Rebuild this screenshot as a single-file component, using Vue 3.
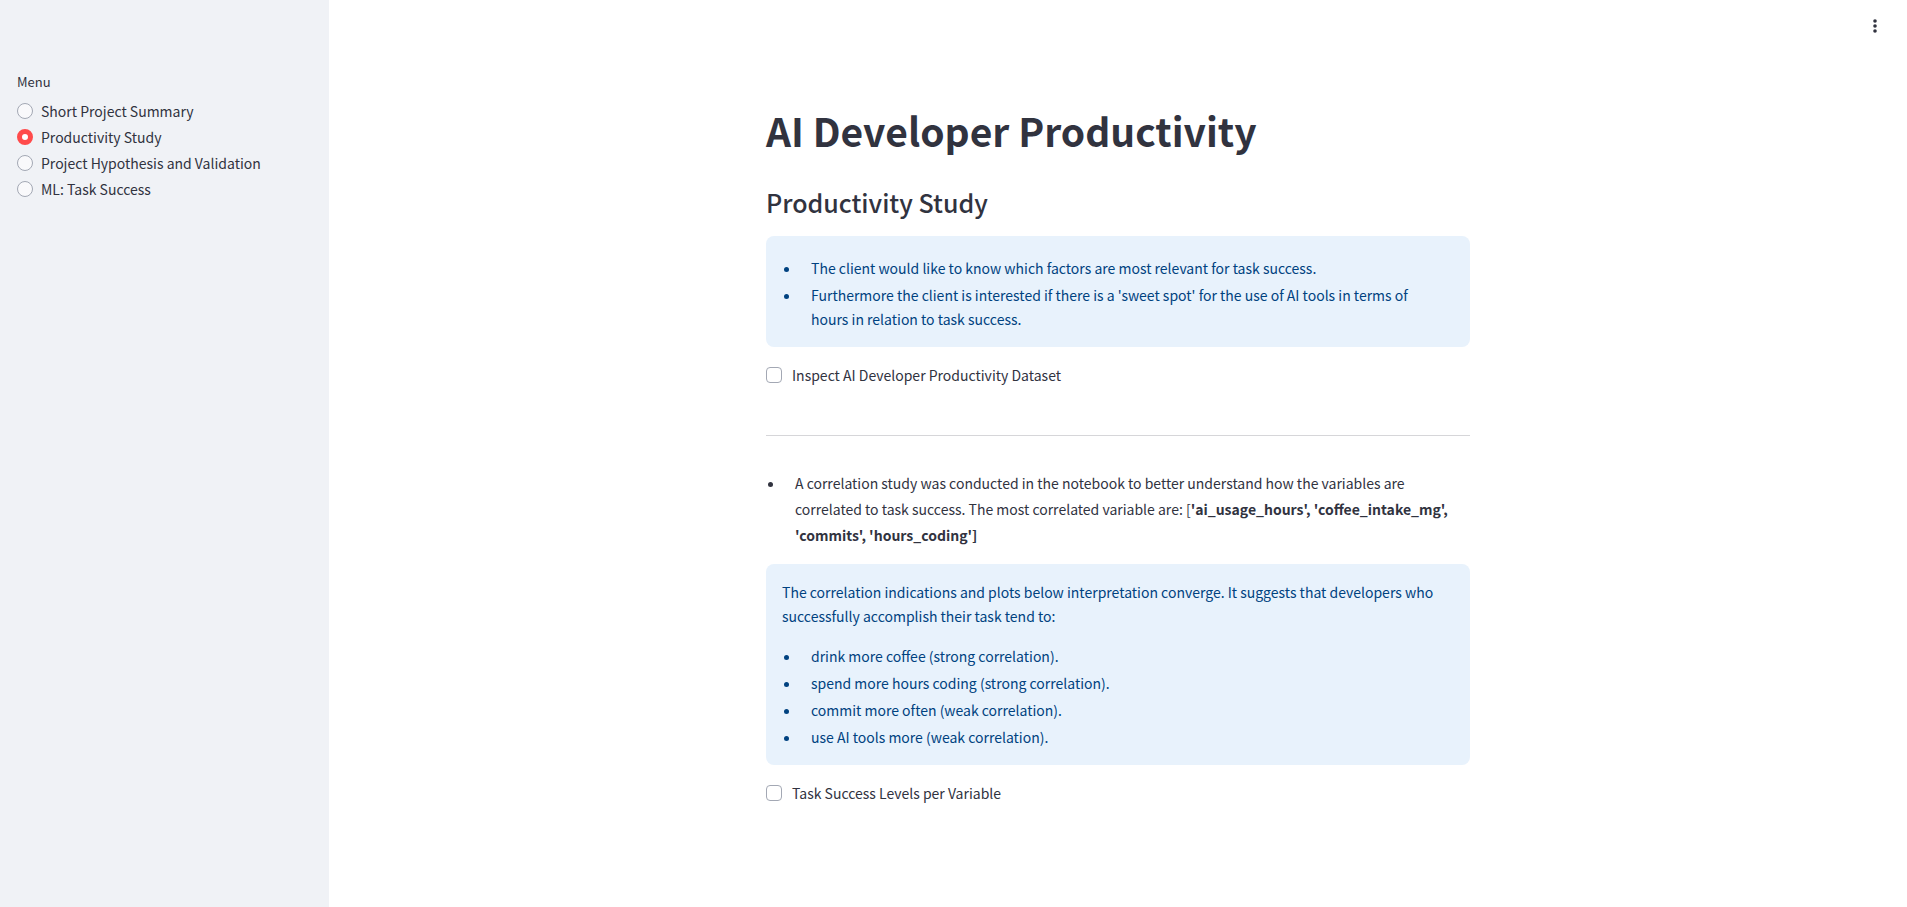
<script setup>
import { ref } from 'vue'

const pages = [
  'Short Project Summary',
  'Productivity Study',
  'Project Hypothesis and Validation',
  'ML: Task Success',
]
const current = ref('Productivity Study')
const inspectDataset = ref(false)
const showLevels = ref(false)

const findings = [
  'drink more coffee (strong correlation).',
  'spend more hours coding (strong correlation).',
  'commit more often (weak correlation).',
  'use AI tools more (weak correlation).',
]
</script>

<template>
  <div class="app">
    <aside class="sidebar">
      <fieldset class="menu">
        <legend>Menu</legend>
        <label v-for="page in pages" :key="page" class="option">
          <input v-model="current" type="radio" name="page" :value="page" />
          <span>{{ page }}</span>
        </label>
      </fieldset>
    </aside>

    <div class="page">
      <header class="toolbar">
        <button type="button" class="kebab" aria-label="Main menu">
          <svg width="20" height="20" viewBox="0 0 20 20" aria-hidden="true">
            <circle cx="10" cy="5" r="1.8" />
            <circle cx="10" cy="10" r="1.8" />
            <circle cx="10" cy="15" r="1.8" />
          </svg>
        </button>
      </header>

      <main class="content">
        <h1>AI Developer Productivity</h1>
        <h2>Productivity Study</h2>

        <section class="info">
          <ul>
            <li>The client would like to know which factors are most relevant for task success.</li>
            <li>
              Furthermore the client is interested if there is a 'sweet spot' for the use of AI tools in terms of
              hours in relation to task success.
            </li>
          </ul>
        </section>

        <label class="check">
          <input v-model="inspectDataset" type="checkbox" />
          <span>Inspect AI Developer Productivity Dataset</span>
        </label>

        <hr />

        <ul class="notes">
          <li>
            A correlation study was conducted in the notebook to better understand how the variables are
            correlated to task success. The most correlated variable are:
            [<strong>'ai_usage_hours', 'coffee_intake_mg', 'commits', 'hours_coding']</strong>
          </li>
        </ul>

        <section class="info">
          <p>
            The correlation indications and plots below interpretation converge. It suggests that developers who
            successfully accomplish their task tend to:
          </p>
          <ul>
            <li v-for="item in findings" :key="item">{{ item }}</li>
          </ul>
        </section>

        <label class="check">
          <input v-model="showLevels" type="checkbox" />
          <span>Task Success Levels per Variable</span>
        </label>
      </main>
    </div>
  </div>
</template>

<style>
body {
  margin: 0;
  background: #ffffff;
}
</style>

<style scoped>
.app {
  display: flex;
  min-height: 100vh;
  color: #31333f;
  font-family: "Noto Sans CJK JP", "Noto Sans", sans-serif;
  font-size: 14px;
  line-height: 24px;
}

.sidebar {
  box-sizing: border-box;
  flex: 0 0 329px;
  padding: 72px 17px 24px;
  background: #f0f2f6;
}

.menu {
  display: flex;
  flex-direction: column;
  margin: 0;
  padding: 0;
  border: 0;
}

.menu legend {
  padding: 0 0 6px;
  font-size: 13px;
  line-height: 20px;
}

.option {
  display: flex;
  align-items: center;
  gap: 8px;
  height: 26px;
  cursor: pointer;
}

.option input {
  appearance: none;
  box-sizing: border-box;
  width: 16px;
  height: 16px;
  margin: 0;
  border: 1px solid #a3a8b4;
  border-radius: 50%;
  background: #f9f9fb;
}

.option input:checked {
  border: 5px solid #ff4b4b;
  background: #ffffff;
}

.page {
  display: flex;
  flex: 1;
  flex-direction: column;
  min-width: 0;
}

.toolbar {
  display: flex;
  justify-content: flex-end;
  padding: 10px 16px;
}

.kebab {
  display: grid;
  place-items: center;
  width: 32px;
  height: 32px;
  padding: 0;
  border: 0;
  border-radius: 8px;
  background: transparent;
  color: #31333f;
  cursor: pointer;
}

.kebab svg {
  fill: currentColor;
}

.content {
  box-sizing: border-box;
  width: 100%;
  max-width: 736px;
  margin: 0 auto;
  padding: 50px 16px 96px;
}

h1,
h2,
p,
ul {
  margin: 0;
  padding: 0;
}

h1 {
  font-size: 39px;
  font-weight: 700;
  line-height: 56px;
}

h2 {
  margin-top: 28px;
  margin-bottom: 18px;
  font-size: 25px;
  font-weight: 500;
  line-height: 32px;
}

.info {
  padding: 16px;
  border-radius: 8px;
  background: #e8f2fc;
  color: #004280;
}

.info ul {
  padding: 4px 16px 0 0;
}

.info p + ul {
  padding-top: 16px;
}

li {
  margin-left: 19px;
  padding-left: 10px;
}

.info li + li {
  margin-top: 3px;
}

.check {
  display: flex;
  align-items: center;
  gap: 10px;
  width: fit-content;
  margin-top: 16px;
  cursor: pointer;
}

.check input {
  appearance: none;
  box-sizing: border-box;
  width: 16px;
  height: 16px;
  margin: 0;
  border: 1px solid #a3a8b4;
  border-radius: 4px;
  background: #ffffff;
}

.check input:checked {
  border-color: #ff4b4b;
  background: #ff4b4b;
}

hr {
  height: 1px;
  margin: 48px 0 34px;
  border: 0;
  background: #d6d6d9;
}

.notes {
  margin-bottom: 16px;
  line-height: 26px;
}
</style>
